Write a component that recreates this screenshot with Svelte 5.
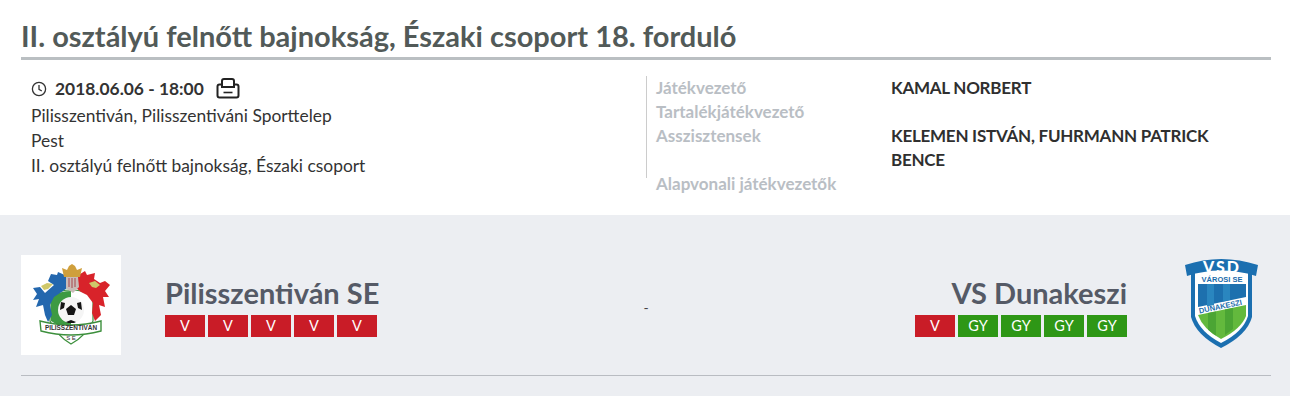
<script>
	const homeForm = ['V', 'V', 'V', 'V', 'V'];
	const awayForm = ['V', 'GY', 'GY', 'GY', 'GY'];

	const officials = [
		{ label: 'Játékvezető', name: 'KAMAL NORBERT' },
		{ label: 'Tartalékjátékvezető', name: '' },
		{ label: 'Asszisztensek', name: 'KELEMEN ISTVÁN, FUHRMANN PATRICK BENCE' },
		{ label: 'Alapvonali játékvezetők', name: '' }
	];
</script>

<div class="page">
	<header class="head">
		<h1>II. osztályú felnőtt bajnokság, Északi csoport 18. forduló</h1>
	</header>

	<section class="info">
		<div class="details">
			<div class="when">
				<svg class="clock" viewBox="0 0 16 16" width="16" height="16" fill="none" stroke="#333" stroke-width="1.3">
					<circle cx="8" cy="8" r="6.6" />
					<path d="M8 4v4.4l2.8 1.6" />
				</svg>
				<span>2018.06.06 - 18:00</span>
				<svg class="print" viewBox="0 0 24 22" width="24" height="22" fill="none" stroke="#222" stroke-width="2">
					<path d="M6 8V3A2 2 0 0 1 8 1h8a2 2 0 0 1 2 2v5" />
					<path d="M5 6.5H3.5a2 2 0 0 0-2 2v9a2 2 0 0 0 2 2h17a2 2 0 0 0 2-2v-9a2 2 0 0 0-2-2H19" />
					<path d="M5 9h14" />
					<path d="M7.5 14.5h9" stroke-width="1.6" />
				</svg>
			</div>
			<div>Pilisszentiván, Pilisszentiváni Sporttelep</div>
			<div>Pest</div>
			<div>II. osztályú felnőtt bajnokság, Északi csoport</div>
		</div>

		<div class="refs">
			{#each officials as o}
				<div class="label">{o.label}</div>
				<div class="name">{o.name}</div>
			{/each}
		</div>
	</section>

	<div class="band">
		<section class="match">
			<div class="crest-box">
				<svg viewBox="0 0 100 100" width="100" height="100">
					<!-- shield -->
					<path d="M29 40 Q50 30 72 40 V66 Q66 80 50 89 Q35 80 29 66 Z" fill="#fff" stroke="#3c8f3c" stroke-width="1.2" />
					<path d="M30 41 Q40 36 50 36 V78 L30 66 Z" fill="#3d9a42" />
					<!-- griffins -->
					<path d="M46 21 L37 17 L36 20 L30 19 L27 26 L33 30 L24 38 L19 32 L12 33 L16 39 L12 45 L18 44 L15 52 L22 50 L24 60 L27 67 L31 60 L29 50 L33 42 L42 36 L46 33 Z" fill="#2367ae" />
					<path d="M56 21 L64 16 L66 20 L74 18 L73 24 L79 28 L84 26 L89 30 L84 36 L88 42 L82 42 L84 52 L78 50 L80 60 L74 66 L71 58 L72 48 L66 40 L60 37 L55 33 Z" fill="#d8232a" />
					<path d="M20 31l6-3 6 1-5 5-4 1z M68 28l6-2 5 4-4 3-4-1z" fill="#cfc86a" />
					<!-- crown and helmet -->
					<path d="M43 22 L41 13 L46 15 L48 11 L51 9 L54 11 L56 15 L61 13 L59 22 Z" fill="#cf9f3c" />
					<path d="M45 22 H57 L58 32 L52 38 L45 33 Z" fill="#c9bcb8" />
					<path d="M48 23v9 M51 23v10 M54 23v9" stroke="#a8454a" stroke-width="1" />
					<!-- ball -->
					<circle cx="50" cy="55" r="13" fill="#f5f5f5" />
					<path d="M50 50l5 4-2 6h-6l-2-6z M40 47l4 1-1 5-4 2z M60 47l-4 1 1 5 4 2z M45 67l5-2 5 2-2 1h-6z" fill="#151515" />
					<!-- banner -->
					<path d="M19 66 Q50 74 80 66 L80 76 Q50 84 20 76 Z" fill="#fff" stroke="#3c8f3c" stroke-width="1.4" />
					<text x="50" y="75" text-anchor="middle" class="crest-text">PILISSZENTIVÁN</text>
					<text x="50" y="85" text-anchor="middle" class="crest-se">S E</text>
				</svg>
			</div>

			<div class="team">
				<div class="team-name">Pilisszentiván SE</div>
				<div class="form">
					{#each homeForm as r}
						<span class="badge" class:win={r === 'GY'}>{r}</span>
					{/each}
				</div>
			</div>

			<div class="score">-</div>

			<div class="team away">
				<div class="team-name">VS Dunakeszi</div>
				<div class="form">
					{#each awayForm as r}
						<span class="badge" class:win={r === 'GY'}>{r}</span>
					{/each}
				</div>
			</div>

			<div class="crest-vsd">
				<svg viewBox="0 0 100 100" width="100" height="100">
					<!-- shield -->
					<path d="M20 14 Q50 4 81 14 V62 Q76 80 50 93 Q25 80 20 62 Z" fill="#1b6fb0" />
					<path d="M24 18 Q50 10 77 18 V61 Q72 77 50 88 Q29 77 24 61 Z" fill="#fff" />
					<path d="M27 29 H75 V42 L27 52 Z" fill="#1d70ae" />
					<path d="M36 29h7v21l-7 1.5z M52 29h7v16l-7 1.5z" fill="#2a86bf" />
					<path d="M27 60 L75 50 V61 Q70 74 50 84 Q32 74 27 60 Z" fill="#63b93d" />
					<path d="M37 58l8-1.6v24l-3-1.6-5-4z M54 54.5l8-1.6v21l-8 6z" fill="#4ba534" />
					<!-- ribbon -->
					<path d="M14 10 Q50 -2 87 10 L85 21 Q50 10 16 21 Z" fill="#1b6fb0" />
					<text x="51" y="18" text-anchor="middle" class="vsd-big">VSD</text>
					<text x="51" y="27" text-anchor="middle" class="vsd-small">VÁROSI SE</text>
					<text x="50" y="54" text-anchor="middle" class="vsd-small" transform="rotate(-11.8 50 54)">DUNAKESZI</text>
				</svg>
			</div>
		</section>
		<div class="rule"></div>
	</div>
</div>

<style>
	:global(body) {
		background: #fff;
	}

	.page {
		font-family: 'Lato', 'Open Sans', sans-serif;
		color: #333;
		width: 1290px;
	}

	.head {
		padding: 18px 19px 0 21px;
	}

	h1 {
		margin: 0;
		font-size: 29px;
		line-height: 36px;
		font-weight: 700;
		color: #525a58;
		border-bottom: 3px solid #babfc2;
		padding-bottom: 3px;
	}

	.info {
		display: grid;
		grid-template-columns: 625px 1fr;
		padding: 16px 19px 0 31px;
		height: 155px;
		box-sizing: border-box;
		font-size: 17.4px;
		line-height: 25px;
	}

	.when {
		display: flex;
		align-items: center;
		gap: 8px;
		font-weight: 700;
		margin-bottom: 2px;
	}

	.print {
		margin-left: 4px;
	}

	.refs {
		display: grid;
		grid-template-columns: 235px 340px;
		grid-auto-rows: max-content;
		align-content: start;
		padding-left: 10px;
		margin-left: -10px;
		font-size: 17px;
		line-height: 24px;
		position: relative;
	}

	/* divider stops short of the last label */
	.refs::before {
		content: '';
		position: absolute;
		left: 0;
		top: 0;
		width: 1px;
		height: 102px;
		background: #ccc;
	}

	.label {
		color: #b9bec4;
		font-weight: 700;
	}

	.name {
		font-weight: 700;
		color: #2f2f2f;
		min-height: 24px;
		letter-spacing: -0.25px;
	}

	.band {
		background: #eceef2;
		padding: 40px 19px 20px 21px;
	}

	.match {
		display: flex;
		align-items: center;
		gap: 44px;
		padding-bottom: 20px;
	}

	.crest-box {
		background: #fff;
		width: 100px;
		height: 100px;
		flex: none;
	}

	.team {
		flex: 1;
		padding-top: 2px;
	}

	.away {
		text-align: right;
	}

	.team-name {
		font-size: 29px;
		line-height: 36px;
		font-weight: 700;
		color: #555a66;
		margin-bottom: 4px;
	}

	.form {
		display: flex;
		gap: 3px;
	}

	.away .form {
		justify-content: flex-end;
	}

	.badge {
		width: 40px;
		height: 22px;
		line-height: 22px;
		text-align: center;
		font-size: 14.5px;
		background: #c91c27;
		color: #fff;
	}

	.badge.win {
		background: #2e9716;
	}

	.score {
		flex: none;
		font-size: 14px;
		color: #444;
		margin-top: 4px;
	}

	.crest-vsd {
		flex: none;
		width: 100px;
		height: 100px;
	}

	.crest-text {
		font-size: 6.4px;
		font-weight: 700;
		fill: #333;
		font-family: 'Liberation Sans', sans-serif;
	}

	.crest-se {
		font-size: 6px;
		fill: #333;
		font-family: 'Liberation Sans', sans-serif;
	}

	.vsd-big {
		font-size: 16px;
		font-weight: 900;
		letter-spacing: 2px;
		fill: #fff;
		font-family: 'Lato', sans-serif;
	}

	.vsd-small {
		font-size: 7.5px;
		font-weight: 700;
		fill: #1a6cab;
		font-family: 'Liberation Sans', sans-serif;
	}

	.rule {
		height: 1px;
		background: #b9bcc2;
	}
</style>
